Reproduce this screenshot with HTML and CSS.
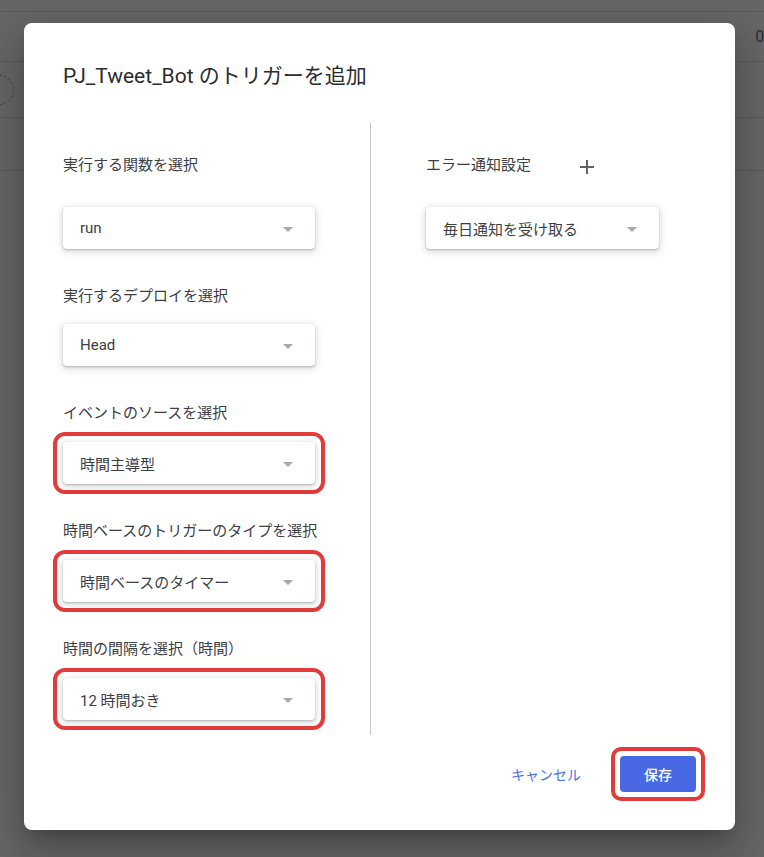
FILE: index.html
```html
<!DOCTYPE html>
<html>
<head>
    <title>トリガーを追加</title>
    <meta name="viewport" content="width=device-width, initial-scale=1.0">
    <link rel="stylesheet" href="styles.css">
</head>
<body>

    <div class="page">
        <div class="pageBar"></div>
        <div class="pageRow rowA"><span class="count">0 :</span></div>
        <div class="pageRow rowB"><span class="ring"></span></div>
        <div class="pageRow rowC"></div>
    </div>

    <div class="dialog">

        <h1 class="title">PJ_Tweet_Bot のトリガーを追加</h1>

        <div class="cols">

            <div class="col left">

                <div class="field first">
                    <div class="label">実行する関数を選択</div>
                    <div class="select"><span>run</span><i class="caret"></i></div>
                </div>

                <div class="field">
                    <div class="label">実行するデプロイを選択</div>
                    <div class="select"><span>Head</span><i class="caret"></i></div>
                </div>

                <div class="field">
                    <div class="label">イベントのソースを選択</div>
                    <div class="mark">
                        <div class="select"><span>時間主導型</span><i class="caret"></i></div>
                    </div>
                </div>

                <div class="field">
                    <div class="label">時間ベースのトリガーのタイプを選択</div>
                    <div class="mark">
                        <div class="select"><span>時間ベースのタイマー</span><i class="caret"></i></div>
                    </div>
                </div>

                <div class="field">
                    <div class="label">時間の間隔を選択（時間）</div>
                    <div class="mark">
                        <div class="select"><span>12 時間おき</span><i class="caret"></i></div>
                    </div>
                </div>

            </div>

            <div class="col right">
                <div class="field first">
                    <div class="label labelRow">
                        エラー通知設定
                        <svg class="plus" width="14" height="14" viewBox="0 0 14 14">
                            <path d="M7 0v14M0 7h14" stroke="#5f6368" stroke-width="2" fill="none"/>
                        </svg>
                    </div>
                    <div class="select narrow"><span>毎日通知を受け取る</span><i class="caret"></i></div>
                </div>
            </div>

        </div>

        <div class="footer">
            <button class="cancel">キャンセル</button>
            <div class="mark markBtn">
                <button class="save">保存</button>
            </div>
        </div>

    </div>

</body>
</html>
```

FILE: styles.css
```css
*{
    margin:0;
    padding:0;
    box-sizing:border-box;
}

body{
    width:764px;
    height:857px;
    background-color:#666666;
    font-family:Roboto, "Noto Sans CJK JP", sans-serif;
    overflow:hidden;
}

/* page behind the overlay */

.pageBar{
    height:12px;
    border-bottom:1px solid #5a5a5a;
}

.pageRow{
    border-bottom:1px solid #5a5a5a;
    display:flex;
    align-items:center;
    overflow:hidden;
}

.rowA{
    height:50px;
    justify-content:flex-end;
}

.count{
    font-size:16px;
    color:#2a2a3a;
    margin-right:-8px;
    white-space:nowrap;
}

.rowB{
    height:56px;
}

.ring{
    width:30px;
    height:30px;
    margin-left:-16px;
    border:1px dashed #474747;
    border-radius:50%;
}

.rowC{
    height:53px;
}

/* dialog */

.dialog{
    position:absolute;
    left:24px;
    top:23px;
    width:711px;
    height:807px;
    padding:39px 39px 38px 39px;
    background-color:white;
    border-radius:8px;
    display:flex;
    flex-direction:column;
    box-shadow:0 11px 15px -7px rgba(0,0,0,.2),
               0 24px 38px 3px rgba(0,0,0,.14),
               0 9px 46px 8px rgba(0,0,0,.12);
}

.title{
    font-size:21px;
    font-weight:400;
    line-height:28px;
    color:#2b2c2f;
}

.cols{
    margin-top:33px;
    display:flex;
}

.col{
    padding-top:32px;
}

.left{
    width:308px;
    padding-bottom:15px;
    border-right:1px solid #c6c6c6;
}

.right{
    padding-left:55px;
}

.field{
    margin-top:37px;
}

.field.first{
    margin-top:0;
}

.label{
    font-size:15px;
    line-height:20px;
    color:#3c4043;
    margin-bottom:18px;
    white-space:nowrap;
}

.first .label{
    margin-bottom:32px;
}

.labelRow{
    display:flex;
    align-items:center;
}

.plus{
    margin-left:49px;
    margin-top:3px;
}

.select{
    width:252px;
    height:42px;
    padding:0 22px 0 17px;
    display:flex;
    align-items:center;
    justify-content:space-between;
    background-color:white;
    border-radius:4px;
    font-size:15px;
    color:#3c4043;
    box-shadow:0 1px 2px 0 rgba(60,64,67,.3),
               0 2px 6px 2px rgba(60,64,67,.15);
}

.narrow{
    width:233px;
}

.caret{
    width:0;
    height:0;
    margin-top:2px;
    border-left:5px solid transparent;
    border-right:5px solid transparent;
    border-top:5px solid #a8a8a8;
}

/* red highlight */

.mark{
    margin:-9px -10px -10px -10px;
    padding:6px;
    border:4px solid #e33b3b;
    border-radius:12px;
    width:272px;
}

.markBtn{
    margin:-9px;
    padding:5px;
    border-radius:10px;
    width:auto;
}

/* footer */

.footer{
    margin-top:auto;
    display:flex;
    justify-content:flex-end;
    align-items:center;
}

.cancel{
    padding:0 8px;
    margin-right:31px;
    border:none;
    background:none;
    font-family:Roboto, "Noto Sans CJK JP", sans-serif;
    font-size:14px;
    color:#4b70e2;
    height:36px;
}

.save{
    display:block;
    width:76px;
    height:36px;
    border:none;
    border-radius:4px;
    background-color:#4869e3;
    color:white;
    font-family:Roboto, "Noto Sans CJK JP", sans-serif;
    font-size:14px;
    font-weight:500;
}
```
